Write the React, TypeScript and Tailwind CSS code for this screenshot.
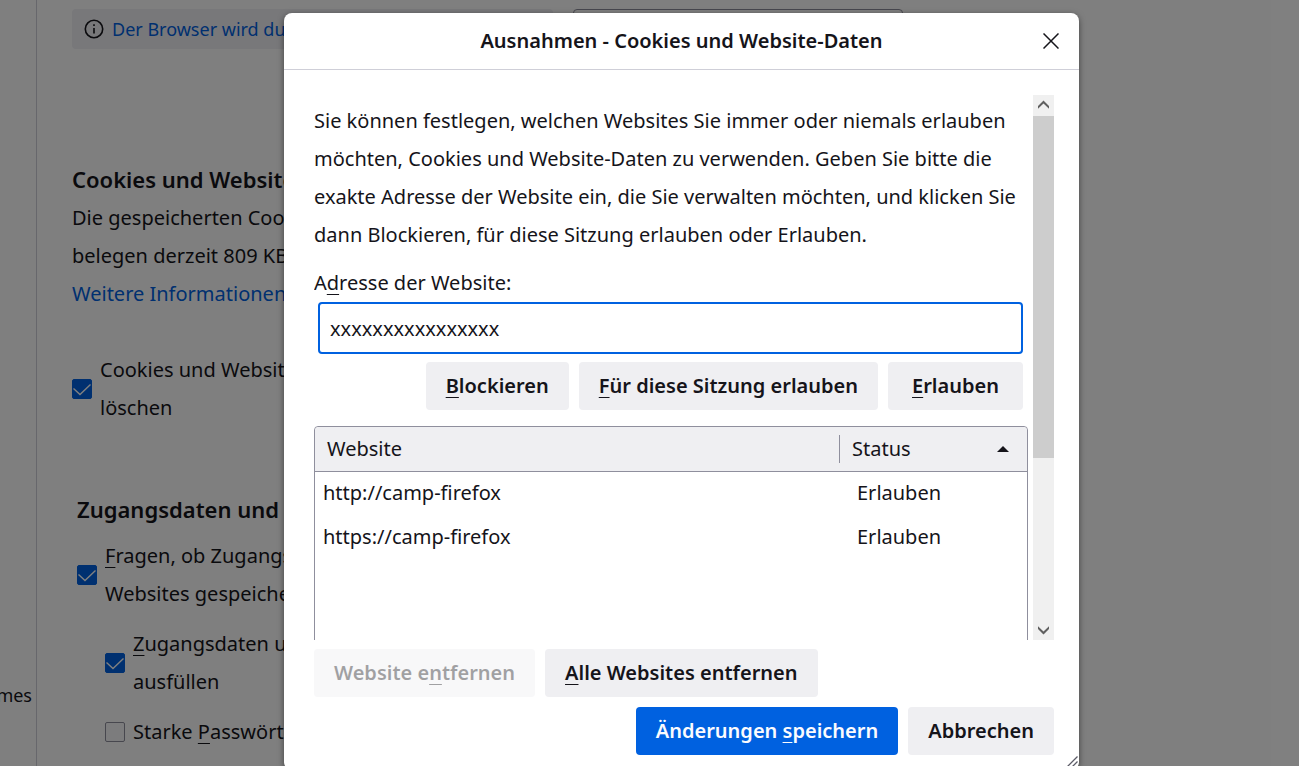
import { useId, useState } from "react";
import type { ReactNode } from "react";
import { clsx } from "clsx";

const exceptions = [
	{ site: "http://camp-firefox", status: "Erlauben" },
	{ site: "https://camp-firefox", status: "Erlauben" },
] as const;

/** Underlined access key inside a label. */
function Key({ children }: { children: ReactNode }) {
	return (
		<span className="underline decoration-1 underline-offset-4">{children}</span>
	);
}

type ButtonProps = {
	children: ReactNode;
	className?: string;
	primary?: boolean;
	disabled?: boolean;
};

function Button({ children, className, primary, disabled }: ButtonProps) {
	return (
		<button
			type="button"
			disabled={disabled}
			className={clsx(
				"h-12 shrink-0 rounded px-5 font-semibold whitespace-nowrap disabled:opacity-40",
				primary ? "bg-[#0061e0] text-[#fbfbfe]" : "bg-[#efeff2] text-[#15141a]",
				className,
			)}
		>
			{children}
		</button>
	);
}

type PrefCheckboxProps = {
	children: ReactNode;
	className?: string;
	defaultChecked?: boolean;
};

function PrefCheckbox({ children, className, defaultChecked }: PrefCheckboxProps) {
	const id = useId();
	return (
		<div className={clsx("flex items-center gap-2", className)}>
			<span className="grid size-5 shrink-0">
				<input
					id={id}
					type="checkbox"
					defaultChecked={defaultChecked}
					className="peer col-start-1 row-start-1 size-5 appearance-none rounded-xs border border-[#8f8f9d] bg-[#f9f9fb] checked:border-[#0061e0] checked:bg-[#0061e0]"
				/>
				<svg
					viewBox="0 0 20 20"
					className="pointer-events-none invisible col-start-1 row-start-1 size-5 peer-checked:visible"
					fill="none"
					stroke="#fff"
					strokeWidth="1.4"
					aria-hidden
				>
					<path d="M1.5 9.5 8 15.5 18.5 5.5" />
				</svg>
			</span>
			<label htmlFor={id} className="whitespace-nowrap">
				{children}
			</label>
		</div>
	);
}

function PreferencesPage() {
	return (
		<div className="flex h-full">
			<nav className="flex w-[37px] shrink-0 flex-col items-end justify-end overflow-hidden border-r border-[#cfcfd8] pr-1 pb-[57px]">
				<a href="#themes" className="text-lg">
					mes
				</a>
			</nav>

			<main className="flex-1 pt-[9px] pl-[35px]">
				<div className="flex gap-5">
					<div className="flex h-10 w-[481px] items-center gap-2 rounded bg-[#f0f0f4] px-3">
						<svg
							viewBox="0 0 20 20"
							className="size-5"
							fill="none"
							stroke="currentColor"
							strokeWidth="1.6"
							aria-hidden
						>
							<circle cx="10" cy="10" r="8.7" />
							<path d="M10 9v5.5M10 5.2v1.8" />
						</svg>
						<a href="#managed" className="text-lg whitespace-nowrap text-[#0061e0]">
							Der Browser wird durch
						</a>
					</div>
					<input
						type="search"
						aria-label="In Einstellungen suchen"
						className="h-10 w-[330px] rounded border border-[#8f8f9d]"
					/>
				</div>

				<section className="mt-[110px]">
					<h2 className="text-[22px] leading-10 font-semibold">
						Cookies und Website-Daten
					</h2>
					<p className="whitespace-nowrap">
						Die gespeicherten Cookies
						<br />
						belegen derzeit 809 KB
						<br />
						<a href="#more" className="text-[#0061e0]">
							Weitere Informationen
						</a>
					</p>
					<PrefCheckbox defaultChecked className="mt-[38px]">
						Cookies und Website-Daten
						<br />
						löschen
					</PrefCheckbox>
				</section>

				<section className="mt-[62px] pl-[5px]">
					<h2 className="text-[22px] leading-10 font-semibold">
						Zugangsdaten und Passwörter
					</h2>
					<PrefCheckbox defaultChecked className="mt-2">
						<Key>F</Key>ragen, ob Zugangsdaten
						<br />
						Websites gespeichert
					</PrefCheckbox>
					<div className="mt-3 flex flex-col gap-3 pl-7">
						<PrefCheckbox defaultChecked>
							<Key>Z</Key>ugangsdaten und
							<br />
							ausfüllen
						</PrefCheckbox>
						<PrefCheckbox>
							Starke <Key>P</Key>asswörter
						</PrefCheckbox>
					</div>
				</section>
			</main>
		</div>
	);
}

function ScrollBar() {
	return (
		<div className="flex w-[21px] shrink-0 flex-col bg-[#f0f0f0]" aria-hidden>
			<svg viewBox="0 0 21 21" className="h-[21px]" fill="#606060">
				<path d="M10.5 5.5 16 11v2.8l-5.5-5.3L5 13.8V11z" />
			</svg>
			<div className="flex-1">
				<div className="h-[68%] bg-[#cdcdcd]" />
			</div>
			<svg viewBox="0 0 21 21" className="h-[21px]" fill="#606060">
				<path d="M10.5 15.5 16 10V7.2l-5.5 5.3L5 7.2V10z" />
			</svg>
		</div>
	);
}

function ExceptionsTable() {
	return (
		<div className="mt-4 min-h-[260px] flex-1 rounded border border-[#8f8f9d]">
			<table className="w-full table-fixed border-collapse text-left">
				<thead>
					<tr className="h-11 border-b border-[#8f8f9d] bg-[#efeff2]">
						<th scope="col" className="rounded-tl pl-3 font-normal">
							Website
						</th>
						<th scope="col" className="w-[188px] rounded-tr font-normal">
							<div className="flex h-7 items-center justify-between border-l border-[#8f8f9d] pr-[18px] pl-3">
								Status
								<svg
									viewBox="0 0 12 6"
									className="h-1.5 w-3"
									fill="currentColor"
									aria-hidden
								>
									<path d="M6 0l6 6H0z" />
								</svg>
							</div>
						</th>
					</tr>
				</thead>
				<tbody>
					{exceptions.map((row) => (
						<tr key={row.site} className="h-11">
							<td className="pl-2">{row.site}</td>
							<td className="pl-[18px]">{row.status}</td>
						</tr>
					))}
				</tbody>
			</table>
		</div>
	);
}

function ExceptionsDialog() {
	const [address, setAddress] = useState("xxxxxxxxxxxxxxxx");

	return (
		<div
			role="dialog"
			aria-modal="true"
			aria-labelledby="dialog-title"
			className="relative flex h-[calc(100vh-9px)] w-full max-w-[795px] shrink-0 flex-col rounded-lg bg-white shadow-[0_2px_6px_rgba(0,0,0,0.5)]"
		>
			<header className="grid h-[57px] shrink-0 grid-cols-[1fr_auto_1fr] items-center border-b border-[#cfcfd8] px-4">
				<h1 id="dialog-title" className="col-start-2 font-semibold">
					Ausnahmen - Cookies und Website-Daten
				</h1>
				<button
					type="button"
					aria-label="Schließen"
					className="grid size-6 place-items-center justify-self-end"
				>
					<svg
						viewBox="0 0 16 16"
						className="size-4"
						fill="none"
						stroke="currentColor"
						strokeWidth="1.5"
						aria-hidden
					>
						<path d="M.5.5l15 15M15.5.5l-15 15" />
					</svg>
				</button>
			</header>

			<div className="flex min-h-0 flex-1 flex-col pt-[25px] pr-[25px] pb-[15px] pl-[30px]">
				<div className="flex min-h-0 flex-1 gap-[5px]">
					<div className="flex flex-1 flex-col overflow-hidden pt-[7px]">
						<p>
							Sie können festlegen, welchen Websites Sie immer oder niemals erlauben
							<br />
							möchten, Cookies und Website-Daten zu verwenden. Geben Sie bitte die
							<br />
							exakte Adresse der Website ein, die Sie verwalten möchten, und klicken Sie
							<br />
							dann Blockieren, für diese Sitzung erlauben oder Erlauben.
						</p>
						<label htmlFor="address" className="mt-2.5">
							A<Key>d</Key>resse der Website:
						</label>
						<div className="mr-[5px] ml-1 flex flex-col gap-2">
							<input
								id="address"
								type="text"
								value={address}
								onChange={(event) => setAddress(event.target.value)}
								className="h-[52px] rounded border-2 border-[#0061e0] px-2.5 outline-none"
							/>
							<div className="flex justify-end gap-2.5">
								<Button>
									<Key>B</Key>lockieren
								</Button>
								<Button>
									<Key>F</Key>ür diese Sitzung erlauben
								</Button>
								<Button className="min-w-[135px]">
									<Key>E</Key>rlauben
								</Button>
							</div>
						</div>
						<ExceptionsTable />
					</div>
					<ScrollBar />
				</div>

				<div className="mt-[9px] flex gap-2.5">
					<Button disabled>
						Website e<Key>n</Key>tfernen
					</Button>
					<Button>
						<Key>A</Key>lle Websites entfernen
					</Button>
				</div>
				<div className="mt-2.5 flex justify-end gap-2.5">
					<Button primary>
						Änderungen <Key>s</Key>peichern
					</Button>
					<Button>Abbrechen</Button>
				</div>
			</div>

			<svg
				viewBox="0 0 14 14"
				className="absolute right-0 bottom-0 size-3.5"
				fill="none"
				stroke="#5b5b66"
				strokeWidth="1.3"
				aria-hidden
			>
				<path d="M1 12 12.500.5M6 12l6.500-6.500" />
			</svg>
		</div>
	);
}

export default function App() {
	return (
		<div className="relative h-screen overflow-hidden bg-white font-['Noto_Sans','Open_Sans',sans-serif] text-xl leading-[38px] text-[#15141a]">
			<PreferencesPage />
			<div className="absolute inset-0 flex items-start justify-center overflow-hidden bg-black/50 pt-[13px] pl-16">
				<ExceptionsDialog />
			</div>
		</div>
	);
}
